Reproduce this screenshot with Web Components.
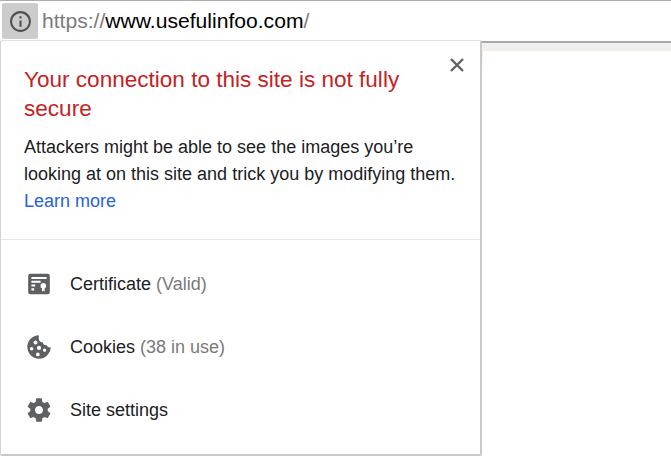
<!DOCTYPE html>
<html>
<head>
<meta charset="UTF-8">
<title>Site info</title>
<style>
  html, body { margin: 0; height: 100%; overflow: hidden; background: #fff; }
  body { font-family: "Liberation Sans", Arial, sans-serif; }
</style>
</head>
<body>
<browser-shell>
  <address-bar slot="bar" scheme="https://" host="www.usefulinfoo.com" path="/"></address-bar>
  <site-popup slot="popup">
    <span slot="title">Your connection to this site is not fully secure</span>
    <span slot="body">Attackers might be able to see the images you’re looking at on this site and trick you by modifying them.</span>
    <span slot="link">Learn more</span>
    <popup-row slot="rows" note="(Valid)">
      <svg slot="icon" viewBox="0 0 24 24" width="26" height="26"><path fill="#5f6062" fill-rule="evenodd" d="M4 2.500h16A2 2 0 0 1 22 4.500v15a2 2 0 0 1-2 2H4a2 2 0 0 1-2-2v-15a2 2 0 0 1 2-2zM5 5.500v1.800h14V5.500zM5 9v1.800h8.500V9zM5 12.500v1.800h3.500v-1.800zM5 16v2h2.500v-2zM16 11a2.700 2.700 0 0 0-1.200 5.100V19l1.200-.8 1.200.8v-2.900A2.700 2.700 0 0 0 16 11z"/></svg>
      Certificate
    </popup-row>
    <popup-row slot="rows" note="(38 in use)">
      <svg slot="icon" viewBox="0 0 24 24" width="28" height="28"><path fill="#5f6062" fill-rule="evenodd" d="M11.800 2a10 10 0 1 0 10.200 10.300c-1.500.4-2.900-.4-3.300-1.800-1.700.4-3.300-.8-3.500-2.500-2 .1-3.600-1.700-3.400-3.600.1-.8 0-1.600 0-2.400zM9 6.500a1.700 1.700 0 1 1 0 3.400 1.700 1.700 0 0 1 0-3.400zM5.700 12a1.500 1.500 0 1 1 0 3 1.500 1.500 0 0 1 0-3zM12 11a1.800 1.800 0 1 1 0 3.600 1.800 1.800 0 0 1 0-3.600zM16.800 13.300a1.400 1.400 0 1 1 0 2.800 1.400 1.400 0 0 1 0-2.800zM11 16.800a1.600 1.600 0 1 1 0 3.200 1.600 1.600 0 0 1 0-3.200z"/></svg>
      Cookies
    </popup-row>
    <popup-row slot="rows">
      <svg slot="icon" viewBox="0 0 24 24" width="28" height="28"><path fill="#5f6062" d="M19.430 12.980c.04-.32.07-.64.070-.98s-.03-.66-.07-.98l2.110-1.650c.19-.15.24-.42.120-.64l-2-3.460c-.12-.22-.39-.3-.61-.22l-2.490 1c-.52-.4-1.080-.73-1.690-.98l-.38-2.650A.488.488 0 0 0 14 2h-4c-.25 0-.46.180-.49.420l-.38 2.650c-.61.250-1.170.590-1.690.980l-2.490-1c-.23-.090-.49 0-.61.220l-2 3.460c-.13.220-.07.490.12.640l2.110 1.650c-.04.320-.07.650-.07.980s.03.660.07.980l-2.110 1.650c-.19.150-.24.420-.12.640l2 3.460c.12.220.39.300.61.220l2.490-1c.52.400 1.080.730 1.690.980l.38 2.650c.03.240.24.420.49.420h4c.25 0 .46-.180.49-.420l.38-2.650c.61-.250 1.170-.590 1.690-.980l2.490 1c.23.090.49 0 .61-.220l2-3.460c.12-.220.07-.490-.12-.640l-2.110-1.650zM12 15.500c-1.930 0-3.500-1.570-3.500-3.500s1.570-3.500 3.500-3.500 3.500 1.570 3.500 3.500-1.570 3.500-3.500 3.500z"/></svg>
      Site settings
    </popup-row>
  </site-popup>
</browser-shell>

<script>
(function () {
    class BrowserShell extends HTMLElement {
        constructor() {
            super();
            this.attachShadow({ mode: "open" }).innerHTML = `
            <style>
                :host { display: flex; flex-direction: column; height: 456px; width: 671px; position: relative; overflow: hidden; }
                .strip { height: 7px; margin-top: 1px; background: #f0f0f0; border-top: 2px solid #a8a8a8; }
                .page { flex: 1; border-top: 1px solid #f7eed8; background: linear-gradient(#f7eed8, #fff) no-repeat 482px 0 / 1px 24px #fff; }
                ::slotted([slot=popup]) { position: absolute; left: 0; top: 40px; }
            </style>
            <slot name="bar"></slot>
            <div class="strip"></div>
            <div class="page"></div>
            <slot name="popup"></slot>`;
        }
    }

    class AddressBar extends HTMLElement {
        constructor() {
            super();
            this.attachShadow({ mode: "open" }).innerHTML = `
            <style>
                :host { display: flex; align-items: center; height: 40px; box-sizing: border-box; border-top: 1px solid #aeaeae; padding: 2px 0 1px 2px; background: #fff; font: 21.100px "Liberation Sans", Arial, sans-serif; color: #7b7b7b; }
                .info { width: 36px; height: 36px; background: #cccccc; border-radius: 2px; display: flex; align-items: center; justify-content: center; margin-right: 4px; }
                .host { color: #000; }
            </style>
            <div class="info">
                <svg viewBox="0 0 24 24" width="25" height="25"><path fill="#505050" d="M11 7h2v2h-2zm0 4h2v6h-2zm1-9C6.480 2 2 6.480 2 12s4.480 10 10 10 10-4.480 10-10S17.520 2 12 2zm0 18c-4.410 0-8-3.590-8-8s3.590-8 8-8 8 3.590 8 8-3.590 8-8 8z"/></svg>
            </div>
            <span>${this.getAttribute("scheme")}<span class="host">${this.getAttribute("host")}</span>${this.getAttribute("path")}</span>`;
        }
    }

    class SitePopup extends HTMLElement {
        constructor() {
            super();
            this.attachShadow({ mode: "open" }).innerHTML = `
            <style>
                :host { display: block; width: 482px; height: 416px; box-sizing: border-box; background: #fff; border: 1px solid #c9c9c9; border-width: 1px 2px 2px 1px; border-top-color: #e2e2e2; border-left-color: #d4d4d4; border-radius: 2px; font-family: "Liberation Sans", Arial, sans-serif; }
                .head { position: relative; padding: 24px 23px 0 23px; height: 199px; box-sizing: border-box; border-bottom: 1px solid #e6e6e6; }
                h1 { margin: 0 50px 0 0; font: 400 22.550px/29px "Liberation Sans", Arial, sans-serif; color: #c5221f; }
                p { margin: 11px 0 0; font-size: 18px; line-height: 27px; color: #202124; }
                a { color: #2962d9; text-decoration: none; display: block; }
                .close { position: absolute; top: 15px; right: 14px; width: 18px; height: 18px; }
                .rows { padding-top: 12px; }
            </style>
            <div class="head">
                <h1><slot name="title"></slot></h1>
                <p><slot name="body"></slot><a><slot name="link"></slot></a></p>
                <svg class="close" viewBox="0 0 18 18"><path d="M3 3l12 12M15 3L3 15" stroke="#5f6368" stroke-width="2.400" fill="none"/></svg>
            </div>
            <div class="rows"><slot name="rows"></slot></div>`;
        }
    }

    class PopupRow extends HTMLElement {
        constructor() {
            super();
            let note = this.getAttribute("note");
            this.attachShadow({ mode: "open" }).innerHTML = `
            <style>
                :host { display: flex; align-items: center; height: 63px; padding-left: 25px; font-size: 18px; color: #202124; }
                .icon { width: 26px; height: 26px; margin-right: 18px; display: flex; align-items: center; justify-content: center; }
                ::slotted(svg) { flex: none; }
                .label { padding-top: 2px; }
                .note { color: #7a7a7a; margin-left: 5px; }
            </style>
            <span class="icon"><slot name="icon"></slot></span>
            <span class="label"><slot></slot></span>
            ${note ? `<span class="label note">${note}</span>` : ""}`;
        }
    }

    customElements.define("browser-shell", BrowserShell);
    customElements.define("address-bar", AddressBar);
    customElements.define("site-popup", SitePopup);
    customElements.define("popup-row", PopupRow);
})();
</script>
</body>
</html>
